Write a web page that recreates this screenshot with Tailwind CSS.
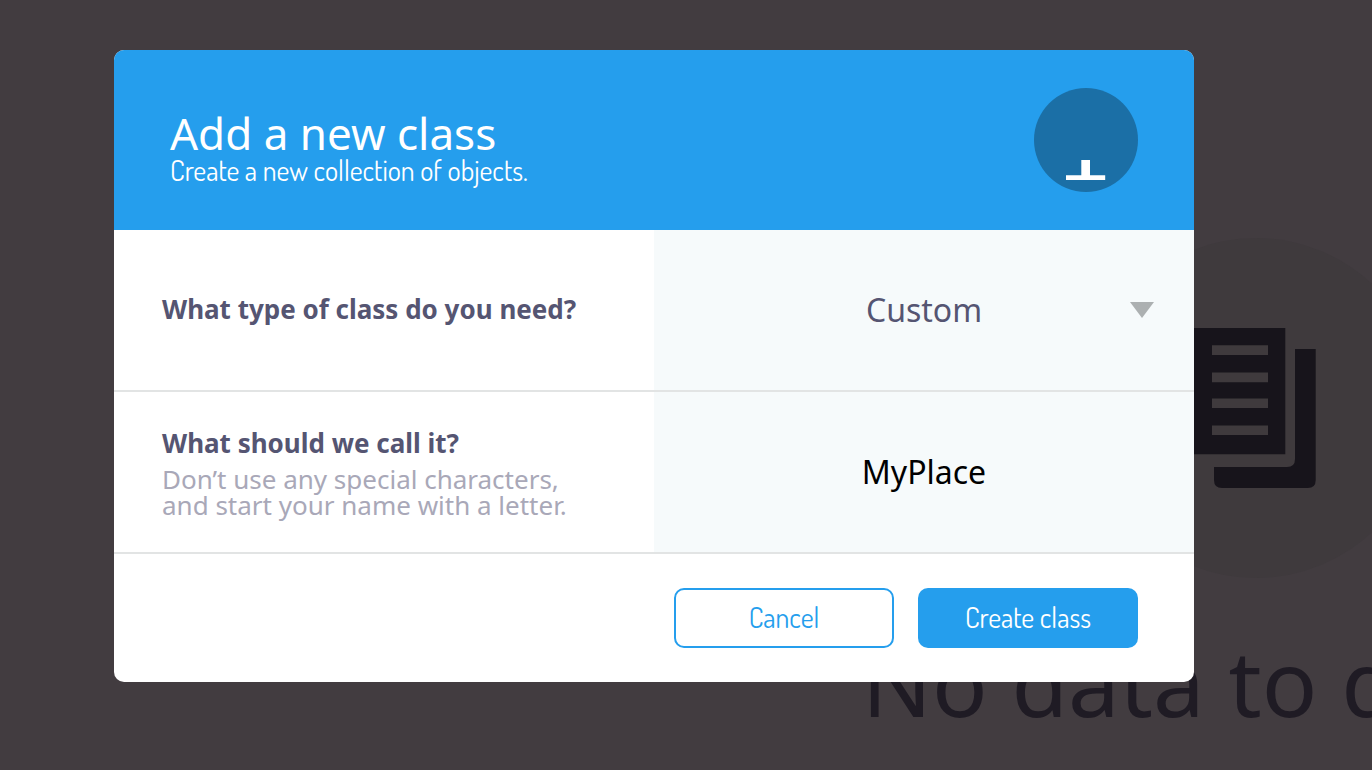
<!DOCTYPE html>
<html lang="en">
<head>
<meta charset="utf-8">
<meta name="viewport" content="width=device-width, initial-scale=1">
<title>Add a new class</title>
<script src="https://cdn.jsdelivr.net/npm/@tailwindcss/browser@4"></script>
</head>
<body class="relative min-h-screen overflow-hidden bg-[#423c40] font-['Noto_Sans',sans-serif]">
  <!-- Empty state behind the dialog -->
  <main class="absolute inset-0 overflow-hidden pt-[238px] pl-[862px]" aria-hidden="true">
    <div class="flex flex-col">
      <svg class="ml-[224px] size-[340px] shrink-0" viewBox="0 0 340 340">
        <circle cx="170" cy="170" r="170" fill="#3f3a3d"/>
        <path fill="#17141b" fill-rule="evenodd" d="M100 90h99.300v126.300H100zM126 107.300h56v9.700h-56zM126 134.500h56v9.700h-56zM126 160.500h56v9.500h-56zM126 187.500h56v9.500h-56z"/>
        <path fill="#17141b" d="M209 111h20.700v131q0 8-8 8H136q-8 0-8-8v-13h73q8 0 8-8z"/>
      </svg>
      <p class="mt-10 text-[92px] leading-[128px] whitespace-nowrap text-[#1f1b24]">No data to display</p>
    </div>
  </main>

  <form class="relative mt-[50px] mr-[178px] ml-[114px] overflow-hidden rounded-[10px] bg-white" role="dialog" aria-labelledby="title">
    <header class="flex h-[180px] items-center justify-between bg-[#259eed] px-14 text-white">
      <div class="pt-4">
        <h1 id="title" class="text-[44px] leading-[44px]">Add a new class</h1>
        <p class="text-[28px] leading-[30px] font-['Dosis',sans-serif]">Create a new collection of objects.</p>
      </div>
      <svg class="size-[104px] shrink-0" viewBox="0 0 104 104" aria-hidden="true">
        <circle cx="52" cy="52" r="52" fill="#1b6fa6"/>
        <path fill="#fff" d="M47.300 72H56v15.300h15.200V92H32v-4.700h15.300z"/>
      </svg>
    </header>

    <div class="grid h-[162px] grid-cols-2 border-b-2 border-[#e2e4e4]">
      <div class="flex items-center pb-0.5 pl-12">
        <label for="kind" class="text-[26px] leading-[34px] font-bold text-[#555572]">What type of class do you need?</label>
      </div>
      <div class="relative bg-[#f6fafb]">
        <select id="kind" class="size-full appearance-none text-center text-[32px] text-[#555572] outline-none [text-align-last:center]">
          <option>Custom</option>
        </select>
        <svg class="pointer-events-none absolute top-[72px] right-10 h-4 w-6" viewBox="0 0 24 16" aria-hidden="true"><path fill="#acb0b1" d="M0 0h24L12 16z"/></svg>
      </div>
    </div>

    <div class="grid h-[162px] grid-cols-2 border-b-2 border-[#e2e4e4]">
      <div class="flex flex-col justify-center pl-12">
        <label for="name" class="text-[26px] leading-[34px] font-bold text-[#555572]">What should we call it?</label>
        <p id="hint" class="mt-1.5 text-[26px] leading-[26px] text-[#a9a8b8]">Don’t use any special characters,<br>and start your name with a letter.</p>
      </div>
      <input id="name" type="text" value="MyPlace" aria-describedby="hint" class="size-full bg-[#f6fafb] pb-0.5 text-center text-[32px] text-black outline-none">
    </div>

    <footer class="flex h-32 items-center justify-end gap-6 px-14 text-[28px] font-['Dosis',sans-serif]">
      <button type="button" class="h-[60px] w-[220px] rounded-[10px] border-2 border-[#259eed] bg-white pb-0.5 text-[#259eed]">Cancel</button>
      <button type="submit" class="h-[60px] w-[220px] rounded-[10px] bg-[#259eed] pb-0.5 text-white">Create class</button>
    </footer>
  </form>
</body>
</html>
